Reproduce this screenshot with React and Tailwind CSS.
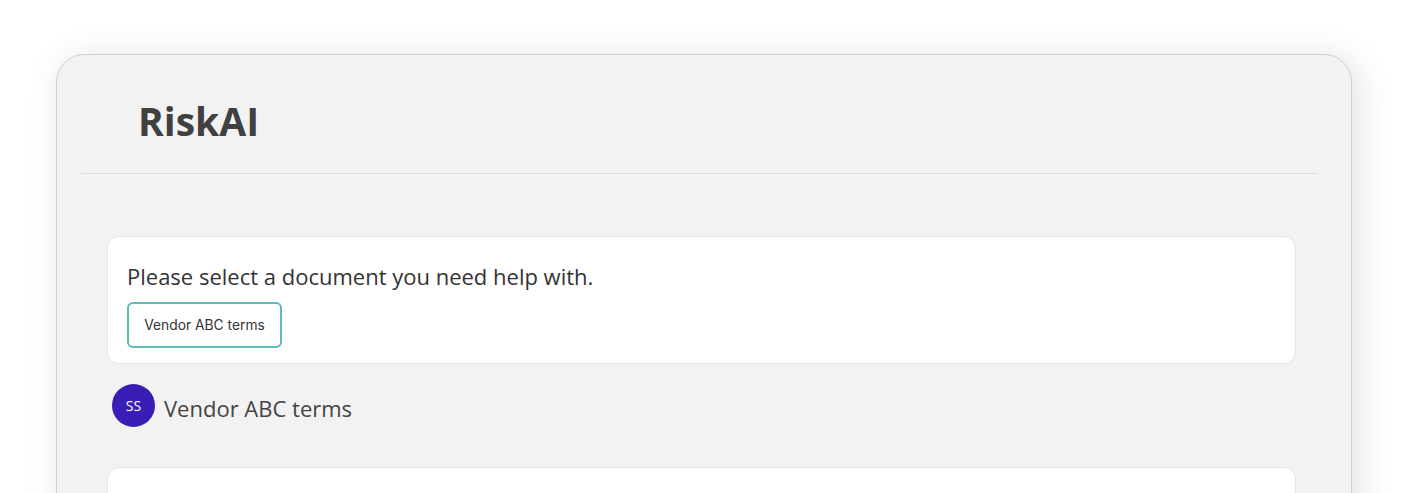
export default function App() {
  return (
    <div className="min-h-screen bg-white pt-[54px] pl-[56px]" style={{ fontFamily: '"Open Sans", sans-serif' }}>
      <div className="w-[1296px] h-[600px] rounded-[28px] border border-[#cfcfcf] bg-[#f2f2f2] shadow-[6px_4px_36px_rgba(0,0,0,0.12)] flex flex-col">
        <div className="ml-[24px] mr-[33px] h-[119px] border-b border-[#dcdcdc] flex items-center pl-[57px] pt-[12px]">
          <h1 className="text-[39px] font-bold text-[#404040] leading-none">RiskAI</h1>
        </div>
        <div className="ml-[50px] mr-[55px] pt-[62px] flex flex-col">
          <div className="bg-white border border-[#e6e6e6] rounded-[12px] pl-[19px] pt-[24px] pb-[15px]">
            <p className="text-[22px] leading-[30px] text-[#333333]">Please select a document you need help with.</p>
            <button className="mt-[11px] h-[46px] w-[155px] rounded-[6px] border-2 border-[#5dbcb8] bg-white text-[13.8px] text-[#333333]" style={{ fontFamily: 'Inter, sans-serif' }}>
              Vendor ABC terms
            </button>
          </div>
          <div className="mt-[20px] ml-[5px] flex items-center gap-[9px]">
            <div className="w-[43px] h-[43px] rounded-full bg-[#3a1db6] text-white text-[14px] flex items-center justify-center">SS</div>
            <span className="text-[22px] text-[#444444] mt-[6px]">Vendor ABC terms</span>
          </div>
          <div className="mt-[40px] bg-white border border-[#e6e6e6] rounded-[12px] h-[120px]"></div>
        </div>
      </div>
    </div>
  );
}
